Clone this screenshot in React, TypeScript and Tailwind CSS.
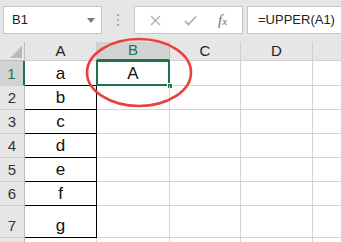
import React from 'react';

const font = { fontFamily: '"Liberation Sans", "Noto Sans CJK SC", sans-serif' };

const rows = [
  { n: '1', v: 'a', h: 'h-[25px]' },
  { n: '2', v: 'b', h: 'h-[24px]' },
  { n: '3', v: 'c', h: 'h-[24px]' },
  { n: '4', v: 'd', h: 'h-[24px]' },
  { n: '5', v: 'e', h: 'h-[24px]' },
  { n: '6', v: 'f', h: 'h-[24px]' },
  { n: '7', v: 'g', h: 'h-[32px]' },
  { n: '', v: '', h: 'h-[24px]' },
];

function FormulaBar() {
  return (
    <div className="h-[42px] bg-[#e6e6e6] flex items-start pt-[6px] pl-[3px]">
      {/* Name box */}
      <div className="w-[99px] h-[28px] bg-white border border-[#c6c6c6] flex items-center justify-between pl-[8px] pr-[6px]">
        <span className="text-[13px] text-[#222]">B1</span>
        <svg width="8" height="5" viewBox="0 0 8 5">
          <path d="M0 0 L8 0 L4 5 Z" fill="#7a7a7a" />
        </svg>
      </div>
      {/* Separator dots */}
      <div className="w-[32px] h-[28px] flex flex-col items-center justify-center gap-[3px]">
        <div className="w-[2px] h-[2px] bg-[#a8a8a8]" />
        <div className="w-[2px] h-[2px] bg-[#a8a8a8]" />
        <div className="w-[2px] h-[2px] bg-[#a8a8a8]" />
      </div>
      {/* Buttons */}
      <div className="w-[109px] h-[28px] bg-white border border-[#c6c6c6] flex items-center">
        <div className="w-[38px] flex justify-center pl-[2px]">
          <svg width="11" height="11" viewBox="0 0 11 11">
            <path d="M1 1 L10 10 M10 1 L1 10" stroke="#b0b0b0" strokeWidth="1.4" />
          </svg>
        </div>
        <div className="w-[34px] flex justify-center">
          <svg width="13" height="11" viewBox="0 0 13 11">
            <path d="M1 6 L4.5 9.5 L12 1.5" stroke="#b0b0b0" strokeWidth="1.8" fill="none" />
          </svg>
        </div>
        <div className="flex-1 flex justify-center pr-[4px]">
          <span className="italic text-[#707070] text-[15px] leading-none" style={{ fontFamily: '"Liberation Serif", serif' }}>
            f<span className="text-[11px]">x</span>
          </span>
        </div>
      </div>
      {/* Formula input */}
      <div className="ml-[4px] flex-1 h-[28px] bg-white border border-r-0 border-[#c6c6c6] flex items-center pl-[10px]">
        <span className="text-[13px] text-[#222]">=UPPER(A1)</span>
      </div>
    </div>
  );
}

function Grid() {
  return (
    <div className="grid grid-cols-[25px_72px_73px_71px_72px_1fr]">
      {/* Header row */}
      <div className="h-[19px] bg-[#e6e6e6] border-r border-b border-[#bdbdbd] flex items-end justify-end pr-[2px] pb-[2px]">
        <svg width="12" height="12" viewBox="0 0 12 12">
          <path d="M12 0 L12 12 L0 12 Z" fill="#b9b9b9" />
        </svg>
      </div>
      <div className="h-[19px] bg-[#e6e6e6] border-r border-b border-[#cfcfcf] flex items-center justify-center text-[15px] text-[#222]">A</div>
      <div className="h-[19px] bg-[#d2d2d2] border-r border-b-2 border-r-[#bdbdbd] border-b-[#217346] flex items-center justify-center text-[15px] text-[#217346]">B</div>
      <div className="h-[19px] bg-[#e6e6e6] border-r border-b border-[#cfcfcf] flex items-center justify-center text-[15px] text-[#222]">C</div>
      <div className="h-[19px] bg-[#e6e6e6] border-r border-b border-[#cfcfcf] flex items-center justify-center text-[15px] text-[#222]">D</div>
      <div className="h-[19px] bg-[#e6e6e6] border-b border-[#cfcfcf]" />

      {rows.map((r, i) => {
        const first = i === 0;
        const inRange = i < 7;
        return (
          <React.Fragment key={i}>
            <div
              className={`${r.h} border-b border-[#cfcfcf] flex items-end justify-center pb-[2px] text-[15px] leading-[18px] ${
                first ? 'bg-[#d2d2d2] text-[#217346] border-r-2 border-r-[#217346]' : 'bg-[#e6e6e6] text-[#333] border-r border-r-[#bdbdbd]'
              }`}
            >
              {r.n}
            </div>
            <div
              className={`${r.h} flex items-end justify-center pb-[1px] text-[17px] leading-[20px] text-[#111] ${
                inRange ? 'border-r border-b border-black' : 'border-r border-b border-[#d4d4d4]'
              }`}
            >
              {r.v}
            </div>
            <div className={`${r.h} relative border-r border-b border-[#d4d4d4] flex items-end justify-center pb-[1px] text-[17px] leading-[20px] text-[#111]`}>
              {first && (
                <>
                  <span className="relative">A</span>
                  <div className="absolute -left-[1px] -top-[1px] -right-[1px] -bottom-[1px] border-2 border-[#217346]" />
                  <div className="absolute -right-[4px] -bottom-[4px] w-[6px] h-[6px] bg-[#217346] border border-white" />
                </>
              )}
            </div>
            <div className={`${r.h} border-r border-b border-[#d4d4d4]`} />
            <div className={`${r.h} border-r border-b border-[#d4d4d4]`} />
            <div className={`${r.h} border-b border-[#d4d4d4]`} />
          </React.Fragment>
        );
      })}
    </div>
  );
}

export default function App() {
  return (
    <div className="relative w-[341px] h-[242px] overflow-hidden bg-white" style={font}>
      <FormulaBar />
      <Grid />
      <svg className="absolute left-0 top-0 pointer-events-none" width="341" height="242">
        <ellipse cx="139" cy="72.5" rx="52" ry="33.5" fill="none" stroke="#e8413b" strokeWidth="2.6" />
      </svg>
    </div>
  );
}
